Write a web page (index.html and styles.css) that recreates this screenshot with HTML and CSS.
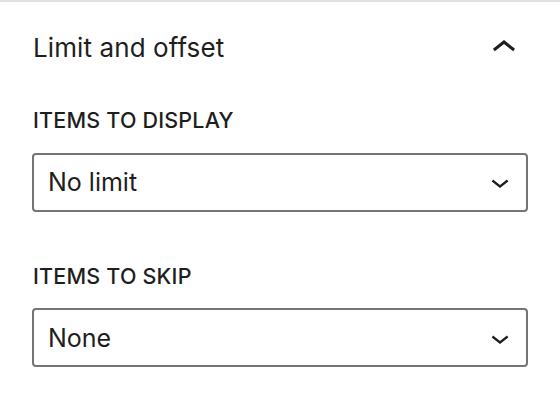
FILE: index.html
```html
<!DOCTYPE html>
<html lang="en">

<head>
  <meta charset="UTF-8" />
  <meta name="viewport" content="width=device-width, initial-scale=1.0" />
  <title>Limit and offset</title>
  <link rel="stylesheet" href="styles.css">
</head>

<body>
  <div class="panel">
    <div class="panel-header">
      <h2 class="panel-title">Limit and offset</h2>
      <svg class="panel-toggle" width="48" height="48" viewBox="0 0 24 24">
        <path d="M6.5 12.4L12 8l5.5 4.4-.9 1.2L12 10l-4.6 3.6-1-1.2z"></path>
      </svg>
    </div>
    <div class="panel-body">
      <div class="field">
        <label class="field-label">Items to display</label>
        <div class="select">
          <span class="select-value">No limit</span>
          <svg class="select-arrow" width="36" height="36" viewBox="0 0 24 24">
            <path d="M17.5 11.6L12 16l-5.5-4.4.9-1.2L12 14l4.6-3.6 1 1.2z"></path>
          </svg>
        </div>
      </div>
      <div class="field">
        <label class="field-label">Items to skip</label>
        <div class="select">
          <span class="select-value">None</span>
          <svg class="select-arrow" width="36" height="36" viewBox="0 0 24 24">
            <path d="M17.5 11.6L12 16l-5.5-4.4.9-1.2L12 14l4.6-3.6 1 1.2z"></path>
          </svg>
        </div>
      </div>
    </div>
  </div>
</body>

</html>
```

FILE: styles.css
```css
body {
  margin: 0;
  background-color: #fff;
  color: #1e1e1e;
  font-family: Inter, "Liberation Sans", sans-serif;
}

.panel {
  border-top: 2px solid #e0e0e0;
}

.panel-header {
  display: flex;
  align-items: center;
  justify-content: space-between;
  height: 92px;
  padding: 0 32px 0 33px;
}

.panel-title {
  margin: 0;
  font-size: 26px;
  font-weight: 400;
  line-height: 1;
  letter-spacing: 0.1px;
}

.panel-toggle {
  fill: #1e1e1e;
}

.panel-body {
  padding: 0 32px;
}

.field {
  margin-bottom: 54px;
}

.field-label {
  display: block;
  margin: 16px 0 21px 1px;
  font-size: 21.5px;
  font-weight: 500;
  line-height: 1;
  letter-spacing: 0.2px;
  text-transform: uppercase;
}

.select {
  display: flex;
  align-items: center;
  justify-content: space-between;
  height: 59px;
  padding: 0 8px 0 14px;
  border: 2px solid #757575;
  border-radius: 4px;
  box-sizing: border-box;
}

.select-value {
  font-size: 25px;
}

.select-arrow {
  fill: #1e1e1e;
}
```
